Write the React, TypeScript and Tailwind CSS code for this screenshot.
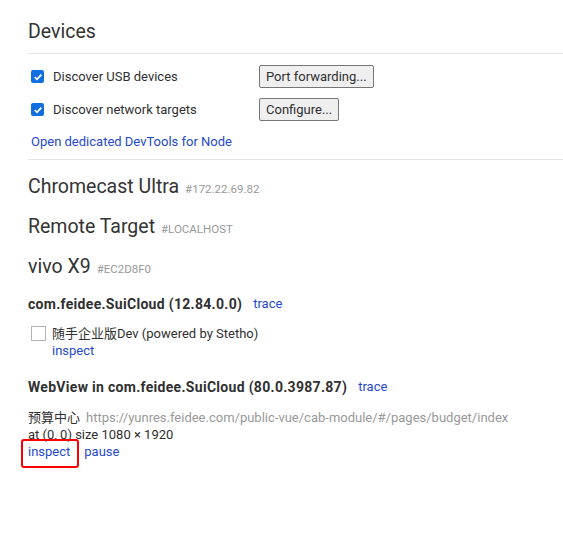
import React from 'react';

const font = { fontFamily: 'Roboto, "Noto Sans CJK SC", sans-serif' };

function Check({ checked }: { checked: boolean }) {
  if (checked) {
    return (
      <span className="inline-flex w-[13px] h-[13px] rounded-[2px] bg-[#0f6fe0] items-center justify-center shrink-0">
        <svg width="10" height="10" viewBox="0 0 10 10">
          <path d="M1.8 5.2 L4 7.3 L8.3 2.6" stroke="#fff" strokeWidth="1.8" fill="none" />
        </svg>
      </span>
    );
  }
  return <span className="inline-block w-[15px] h-[15px] border border-[#b4b4b4] bg-white shrink-0" />;
}

function Device({ name, serial }: { name: string; serial: string }) {
  return (
    <div className="flex items-baseline h-[40px] pt-[6px]">
      <span className="text-[19.5px] text-[#333]">{name}</span>
      <span className="ml-[6px] text-[11.5px] text-[#999]">{serial}</span>
    </div>
  );
}

export default function App() {
  return (
    <div className="bg-white min-h-screen w-[563px] h-[553px] overflow-hidden text-[#303030] text-[13px] relative" style={font}>
      <div className="pl-[28px]">
        <h1 className="text-[19.5px] font-normal text-[#333] pt-[18px] h-[53px] leading-[28px]">Devices</h1>
        <div className="border-t border-[#e6e6e6]" />
        <div className="pl-[3px] pt-[11px]">
          <div className="flex items-center h-[23px]">
            <div className="flex items-center gap-[9px] w-[228px]">
              <Check checked />
              <span>Discover USB devices</span>
            </div>
            <button className="h-[23px] px-[6px] border border-[#767676] rounded-[2px] bg-[#efefef] text-[13px] leading-none">Port forwarding...</button>
          </div>
          <div className="flex items-center h-[23px] mt-[10px]">
            <div className="flex items-center gap-[9px] w-[228px]">
              <Check checked />
              <span>Discover network targets</span>
            </div>
            <button className="h-[23px] px-[6px] border border-[#767676] rounded-[2px] bg-[#efefef] text-[13px] leading-none">Configure...</button>
          </div>
          <div className="h-[37px] flex items-center text-[#2548d0] pt-[4px]">Open dedicated DevTools for Node</div>
        </div>
        <div className="border-t border-[#e6e6e6] mt-[1px]" />
        <div className="pt-[6px]">
          <Device name="Chromecast Ultra" serial="#172.22.69.82" />
          <Device name="Remote Target" serial="#LOCALHOST" />
          <Device name="vivo X9" serial="#EC2D8F0" />
        </div>
        <div className="mt-[8px] flex items-center h-[20px]">
          <span className="font-bold text-[14px] tracking-[0.3px]">com.feidee.SuiCloud (12.84.0.0)</span>
          <span className="ml-[11px] text-[#2548d0]">trace</span>
        </div>
        <div className="mt-[12px] flex items-start pl-[3px]">
          <Check checked={false} />
          <div className="ml-[6px] -mt-[1px] leading-[17px]">
            <div>随手企业版Dev (powered by Stetho)</div>
            <div className="text-[#2548d0]">inspect</div>
          </div>
        </div>
        <div className="mt-[18px] flex items-center h-[20px]">
          <span className="font-bold text-[14px] tracking-[0.3px]">WebView in com.feidee.SuiCloud (80.0.3987.87)</span>
          <span className="ml-[11px] text-[#2548d0]">trace</span>
        </div>
        <div className="mt-[12px] leading-[17px]">
          <div>
            <span>预算中心</span>
            <span className="ml-[6px] text-[#999]">https://yunres.feidee.com/public-vue/cab-module/#/pages/budget/index</span>
          </div>
          <div>at (0, 0) size 1080 × 1920</div>
          <div className="flex gap-[14px] text-[#2548d0]">
            <span>inspect</span>
            <span>pause</span>
          </div>
        </div>
      </div>
      <div className="absolute left-[21px] top-[439px] w-[58px] h-[29px] border-[2.5px] border-[#f00] rounded-[3px]" />
    </div>
  );
}
